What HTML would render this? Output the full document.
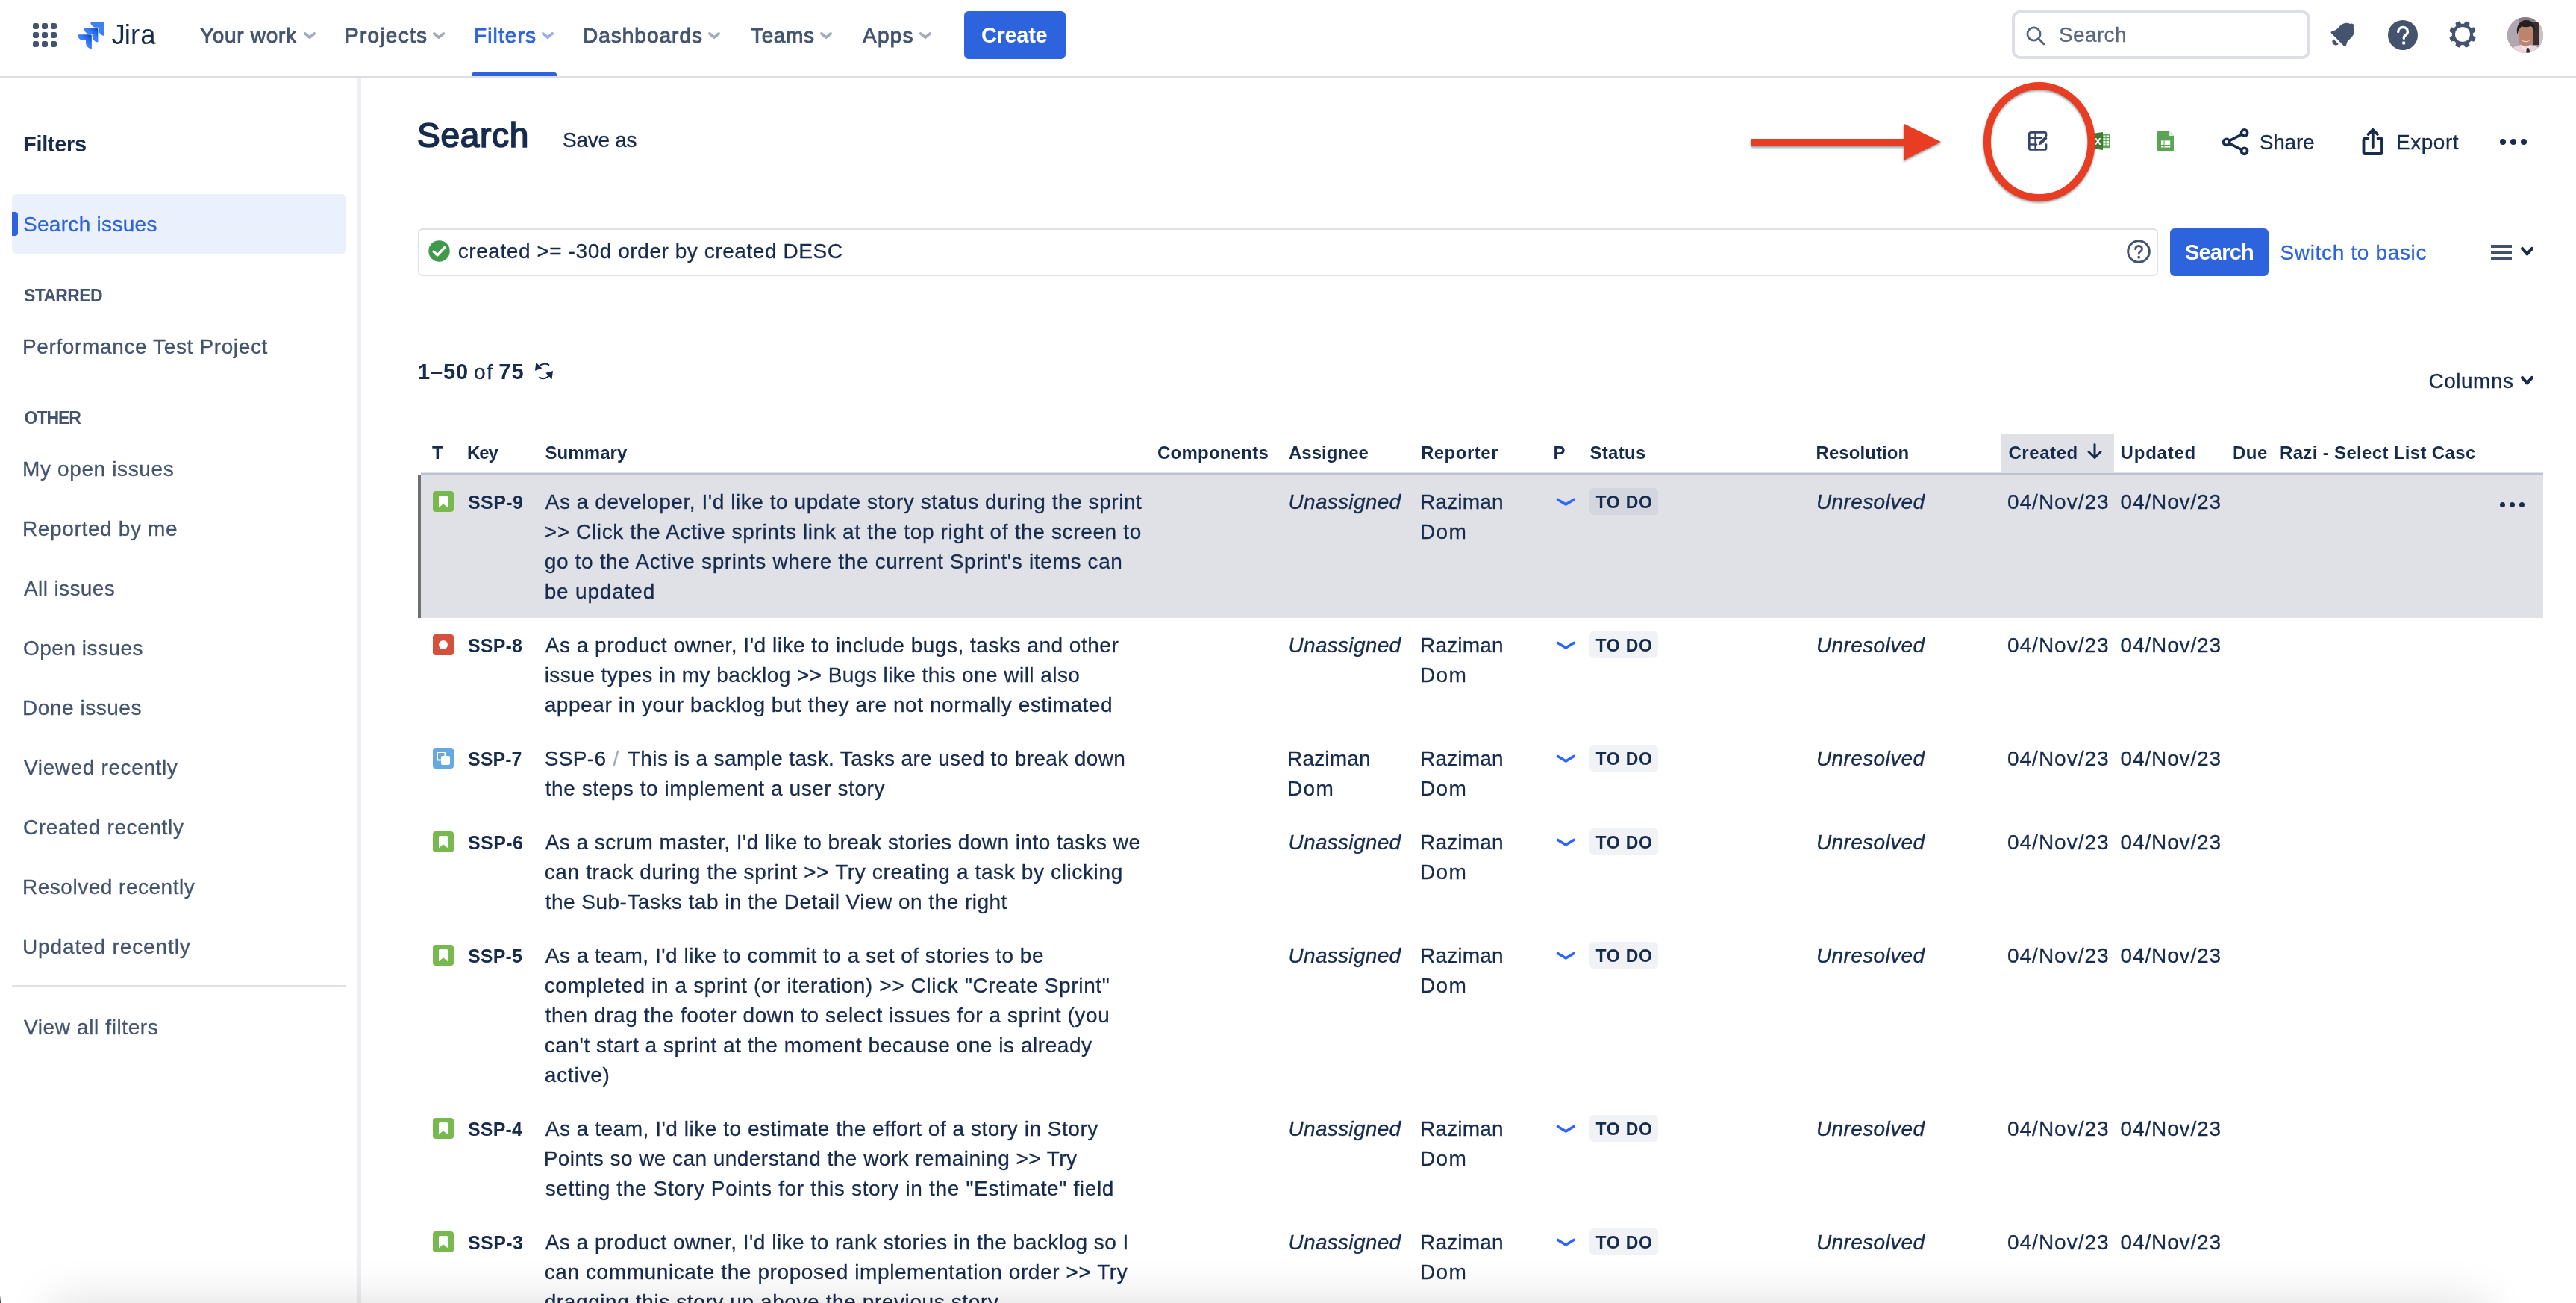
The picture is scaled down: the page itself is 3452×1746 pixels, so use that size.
<!DOCTYPE html>
<html lang="en"><head><meta charset="utf-8"><title>Search - Jira</title><style>
*{box-sizing:border-box;margin:0;padding:0}
html,body{width:3452px;height:1746px;overflow:hidden;background:#fff}
body{position:relative;font-family:"Liberation Sans",sans-serif;color:#172b4d;font-size:28px}
.t{position:absolute;white-space:nowrap;line-height:1;display:block;font-weight:400;font-style:normal;text-decoration:none}
.abs{position:absolute}
header,aside,main{position:absolute;left:0;top:0;will-change:transform}
svg{position:absolute;overflow:visible}
.navline{left:0;top:102px;width:3452px;height:2px;background:#dcdee4}
.sideline{left:478px;top:104px;width:6px;height:1642px;background:#edeef1}
.btn{background:#2d64dd;border-radius:6px}
.loz{position:absolute;left:2130px;width:92px;height:36px;border-radius:6px;background:#f1f2f5}
.sel .loz{background:#d3d6df}
.ic{position:absolute;left:580px;width:28px;height:28px}
.row{position:absolute;left:0;width:3452px}
</style></head><body><header><svg style="left:44px;top:31px" width="32" height="32" viewBox="0 0 32 32" fill="#44546f"><rect x="0" y="0" width="8" height="8" rx="2.4"/><rect x="12" y="0" width="8" height="8" rx="2.4"/><rect x="24" y="0" width="8" height="8" rx="2.4"/><rect x="0" y="12" width="8" height="8" rx="2.4"/><rect x="12" y="12" width="8" height="8" rx="2.4"/><rect x="24" y="12" width="8" height="8" rx="2.4"/><rect x="0" y="24" width="8" height="8" rx="2.4"/><rect x="12" y="24" width="8" height="8" rx="2.4"/><rect x="24" y="24" width="8" height="8" rx="2.4"/></svg><svg style="left:104px;top:23px" width="36" height="42" viewBox="0 0 23.94 27.93">
<defs><linearGradient id="jg1" x1="17.9" y1="9.8" x2="13.0" y2="14.9" gradientUnits="userSpaceOnUse"><stop offset="0.18" stop-color="#0f4ed0"/><stop offset="1" stop-color="#3b7df6"/></linearGradient>
<linearGradient id="jg2" x1="12.3" y1="15.5" x2="6.7" y2="21.0" gradientUnits="userSpaceOnUse"><stop offset="0.18" stop-color="#0f4ed0"/><stop offset="1" stop-color="#3b7df6"/></linearGradient></defs>
<path d="M22.9366 4H11.4099C11.4099 5.37956 11.958 6.70259 12.9335 7.6781C13.909 8.6536 15.232 9.20163 16.6116 9.20163H18.7349V11.2517C18.7367 14.1219 21.063 16.4482 23.9332 16.45V4.99664C23.9332 4.44622 23.487 4 22.9366 4Z" fill="#4080f5"/>
<path d="M17.2332 9.74329H5.70646C5.70826 12.6135 8.03452 14.9398 10.9047 14.9416H13.0281V16.9982C13.0317 19.8684 15.3594 22.1932 18.2296 22.1932V10.7399C18.2296 10.1895 17.7836 9.74329 17.2332 9.74329Z" fill="url(#jg1)"/>
<path d="M11.5266 15.4833H0C0 18.3561 2.32888 20.6849 5.20166 20.6849H7.33164V22.735C7.33343 25.6026 9.65557 27.928 12.5233 27.9333V16.4799C12.5233 15.9295 12.077 15.4833 11.5266 15.4833Z" fill="url(#jg2)"/></svg><svg style="left:0;top:0" width="260" height="100" viewBox="0 0 260 100"><text x="149.500 166.800 175 188.300" y="59.100" font-family="Liberation Sans, sans-serif" font-size="36.500" fill="#172b4d">Jira</text></svg><span class="t" style="left:268.0px;top:33.8px;font-size:28px;letter-spacing:0.69px;color:#44546f;-webkit-text-stroke:0.9px;">Your work</span><svg style="left:407px;top:43px" width="16" height="9" viewBox="0 0 16 9"><path d="M1.8 1.8 L8.0 7.2 L14.2 1.8" fill="none" stroke="#a3abba" stroke-width="3.6" stroke-linecap="round" stroke-linejoin="round"/></svg><span class="t" style="left:462.0px;top:33.8px;font-size:28px;letter-spacing:1.27px;color:#44546f;-webkit-text-stroke:0.9px;">Projects</span><svg style="left:580px;top:43px" width="16" height="9" viewBox="0 0 16 9"><path d="M1.8 1.8 L8.0 7.2 L14.2 1.8" fill="none" stroke="#a3abba" stroke-width="3.6" stroke-linecap="round" stroke-linejoin="round"/></svg><span class="t" style="left:635.0px;top:33.8px;font-size:28px;letter-spacing:1.13px;color:#2d64dd;-webkit-text-stroke:0.9px;">Filters</span><svg style="left:726px;top:43px" width="16" height="9" viewBox="0 0 16 9"><path d="M1.8 1.8 L8.0 7.2 L14.2 1.8" fill="none" stroke="#93b0ee" stroke-width="3.6" stroke-linecap="round" stroke-linejoin="round"/></svg><span class="t" style="left:781.0px;top:33.8px;font-size:28px;letter-spacing:1.00px;color:#44546f;-webkit-text-stroke:0.9px;">Dashboards</span><svg style="left:949px;top:43px" width="16" height="9" viewBox="0 0 16 9"><path d="M1.8 1.8 L8.0 7.2 L14.2 1.8" fill="none" stroke="#a3abba" stroke-width="3.6" stroke-linecap="round" stroke-linejoin="round"/></svg><span class="t" style="left:1006.0px;top:33.8px;font-size:28px;letter-spacing:0.63px;color:#44546f;-webkit-text-stroke:0.9px;">Teams</span><svg style="left:1099px;top:43px" width="16" height="9" viewBox="0 0 16 9"><path d="M1.8 1.8 L8.0 7.2 L14.2 1.8" fill="none" stroke="#a3abba" stroke-width="3.6" stroke-linecap="round" stroke-linejoin="round"/></svg><span class="t" style="left:1156.0px;top:33.8px;font-size:28px;letter-spacing:1.23px;color:#44546f;-webkit-text-stroke:0.9px;">Apps</span><svg style="left:1232px;top:43px" width="16" height="9" viewBox="0 0 16 9"><path d="M1.8 1.8 L8.0 7.2 L14.2 1.8" fill="none" stroke="#a3abba" stroke-width="3.6" stroke-linecap="round" stroke-linejoin="round"/></svg><div class="abs" style="left:632px;top:97px;width:114px;height:6px;background:#2d64dd;border-radius:3px 3px 0 0"></div><div class="abs btn" style="left:1292px;top:15px;width:136px;height:64px"></div><span class="t" style="left:1315.0px;top:32.8px;font-size:29px;letter-spacing:-0.33px;font-weight:700;color:#fff;">Create</span><div class="abs" style="left:2696px;top:14px;width:400px;height:65px;border:4px solid #dcdfe6;border-radius:11px"></div><svg style="left:2715px;top:35px" width="26" height="26" viewBox="0 0 26 26"><circle cx="10.5" cy="10.5" r="8.6" fill="none" stroke="#56637c" stroke-width="2.8"/><path d="M17 17 L24 24" stroke="#56637c" stroke-width="2.8" stroke-linecap="round"/></svg><span class="t" style="left:2759.0px;top:32.8px;font-size:28px;letter-spacing:0.37px;color:#5b6881;-webkit-text-stroke:0.3px;">Search</span><svg style="left:3113.700px;top:22px" width="49.800" height="49.800" viewBox="0 0 40 40"><g transform="rotate(45 20 20)" fill="#44546f">
<path d="M20 3.500c1.300 0 2.300.9 2.400 2.100c3.900 1.100 6.300 4.600 6.300 8.800v6.500l2.100 4.300c.5.900-.1 1.900-1.100 1.900H10.300c-1 0-1.600-1-1.100-1.900l2.100-4.300v-6.500c0-4.200 2.400-7.700 6.300-8.800c.1-1.200 1.100-2.100 2.400-2.100z"/>
<path d="M16 29.800h8c0 2.200-1.800 3.900-4 3.900s-4-1.700-4-3.900z"/></g></svg><svg style="left:3200px;top:27px" width="40" height="40" viewBox="0 0 40 40"><circle cx="20" cy="20" r="20" fill="#44546f"/><path d="M13.700 15.500c0-3.500 2.800-6 6.400-6s6.300 2.400 6.300 5.800c0 2.600-1.500 4-3.200 5.100c-1.300.9-1.900 1.600-1.900 3v.8" fill="none" stroke="#fff" stroke-width="3.400" stroke-linecap="round"/><circle cx="21.200" cy="30.500" r="2.300" fill="#fff"/></svg><svg style="left:3279.5px;top:26.300px" width="40" height="40" viewBox="0 0 40 40"><path d="M32.96 22.53 L36.28 24.55 L34.73 28.29 L30.95 27.37 L27.37 30.95 L28.29 34.73 L24.55 36.28 L22.53 32.96 L17.47 32.96 L15.45 36.28 L11.71 34.73 L12.63 30.95 L9.05 27.37 L5.27 28.29 L3.72 24.55 L7.04 22.53 L7.04 17.47 L3.72 15.45 L5.27 11.71 L9.05 12.63 L12.63 9.05 L11.71 5.27 L15.45 3.72 L17.47 7.04 L22.53 7.04 L24.55 3.72 L28.29 5.27 L27.37 9.05 L30.95 12.63 L34.73 11.71 L36.28 15.45 L32.96 17.47Z M20 9.6a10.4 10.4 0 1 0 0 20.800a10.400 10.400 0 1 0 0-20.800Z" fill="#44546f" fill-rule="evenodd" stroke="#44546f" stroke-width="2.4" stroke-linejoin="round"/><circle cx="20" cy="20" r="10.100" fill="#fff"/></svg><svg style="left:3360px;top:23px" width="48" height="48" viewBox="0 0 48 48"><defs><clipPath id="av"><circle cx="24" cy="24" r="24"/></clipPath></defs>
<g clip-path="url(#av)"><rect width="48" height="48" fill="#9f939d"/><rect x="0" y="0" width="15" height="48" fill="#b1a7b1"/><rect x="16" y="0" width="20" height="12" fill="#8a7d88"/><rect x="34" y="7" width="8.500" height="30" fill="#3a2d2b"/><rect x="42.500" y="0" width="6" height="48" fill="#c9c1c9"/>
<path d="M3 48c1-7 7-9.500 13-10.500l8-2l9 2c6 1 11 3.500 12 10.500z" fill="#ead5da"/>
<ellipse cx="24.800" cy="24.500" rx="10" ry="14.500" fill="#bd846d"/>
<path d="M13.500 23c-2.500-10 3-19 11.500-19s13.500 6 11.800 17c-.8-4-2.500-7.500-5.300-9c-4 1.500-9 1.500-12.500.3c-2.500 2.200-4.500 6-5.500 10.700z" fill="#261e21"/>
<path d="M19.500 30.500c3 2.400 8 2.400 10.500 0c-1 3.600-9.500 3.600-10.500 0z" fill="#f3e6e2"/>
<path d="M20 38l4.800 4l4.800-4l1 2l-5.800 5l-5.800-5z" fill="#f6ecef"/>
<path d="M25.500 43.500l1.500-2.500l2 .5l1.500 7h-5z" fill="#2c2630"/></g></svg><div class="abs navline"></div></header><aside><div class="abs sideline"></div><h2 class="t" style="left:31.0px;top:178.8px;font-size:29px;letter-spacing:-0.32px;font-weight:700;color:#172b4d;">Filters</h2><div class="abs" style="left:16px;top:260px;width:448px;height:80px;background:#eaf0fc;border-radius:6px"></div><div class="abs" style="left:16px;top:284px;width:8px;height:32px;background:#2d64dd;border-radius:0 4px 4px 0"></div><a class="t" style="left:31.0px;top:286.8px;font-size:28px;letter-spacing:0.30px;color:#2d64dd;-webkit-text-stroke:0.3px;">Search issues</a><span class="t" style="left:32.0px;top:384.8px;font-size:23px;letter-spacing:-0.64px;font-weight:700;color:#44546f;">STARRED</span><a class="t" style="left:30.0px;top:450.8px;font-size:28px;letter-spacing:0.63px;color:#44546f;-webkit-text-stroke:0.3px;">Performance Test Project</a><span class="t" style="left:32.6px;top:548.8px;font-size:23px;letter-spacing:-1.05px;font-weight:700;color:#44546f;">OTHER</span><a class="t" style="left:30.0px;top:614.8px;font-size:28px;letter-spacing:0.63px;color:#44546f;-webkit-text-stroke:0.3px;">My open issues</a><a class="t" style="left:30.0px;top:694.8px;font-size:28px;letter-spacing:0.64px;color:#44546f;-webkit-text-stroke:0.3px;">Reported by me</a><a class="t" style="left:32.0px;top:774.8px;font-size:28px;letter-spacing:0.38px;color:#44546f;-webkit-text-stroke:0.3px;">All issues</a><a class="t" style="left:31.0px;top:854.8px;font-size:28px;letter-spacing:0.49px;color:#44546f;-webkit-text-stroke:0.3px;">Open issues</a><a class="t" style="left:30.0px;top:934.8px;font-size:28px;letter-spacing:0.54px;color:#44546f;-webkit-text-stroke:0.3px;">Done issues</a><a class="t" style="left:32.0px;top:1014.8px;font-size:28px;letter-spacing:0.62px;color:#44546f;-webkit-text-stroke:0.3px;">Viewed recently</a><a class="t" style="left:31.0px;top:1094.8px;font-size:28px;letter-spacing:0.63px;color:#44546f;-webkit-text-stroke:0.3px;">Created recently</a><a class="t" style="left:30.0px;top:1174.8px;font-size:28px;letter-spacing:0.51px;color:#44546f;-webkit-text-stroke:0.3px;">Resolved recently</a><a class="t" style="left:30.0px;top:1254.8px;font-size:28px;letter-spacing:0.87px;color:#44546f;-webkit-text-stroke:0.3px;">Updated recently</a><div class="abs" style="left:16px;top:1320px;width:448px;height:3px;background:#dfe1e6"></div><a class="t" style="left:32.0px;top:1362.8px;font-size:28px;letter-spacing:0.61px;color:#44546f;-webkit-text-stroke:0.3px;">View all filters</a></aside><main><svg style="left:2799px;top:177px" width="29" height="24" viewBox="3 0 29 24"><rect x="20" y="2.600" width="12" height="18.600" fill="#5fa852"/><path d="M22.500 5.500h7.500M22.500 9.200h7.500M22.500 12.900h7.500M22.500 16.600h7.500" stroke="#fff" stroke-width="2"/><path d="M26 3.500V20" stroke="#5fa852" stroke-width="1.200"/><path d="M4.500 2.400L22 0V24L4.500 21.600Z" fill="#3f7d38"/><text x="10.700" y="16.600" font-family="Liberation Sans, sans-serif" font-size="13.500" font-weight="700" fill="#fff">X</text></svg><h1 class="t" style="left:559.0px;top:158.2px;font-size:46px;letter-spacing:0.71px;color:#172b4d;-webkit-text-stroke:1.7px;">Search</h1><span class="t" style="left:754.0px;top:173.8px;font-size:28px;letter-spacing:-0.26px;color:#172b4d;-webkit-text-stroke:0.3px;">Save as</span><svg style="left:2330px;top:100px;filter:drop-shadow(0 2.500px 1.600px rgba(60,85,95,.55))" width="500" height="190" viewBox="2330 100 500 190">
<rect x="2346.5" y="186" width="210" height="10" fill="#e83d23"/><path d="M2551 165.500 L2601 190 L2551 215Z" fill="#e83d23"/>
<ellipse cx="2732.700" cy="190" rx="69.800" ry="75" fill="none" stroke="#e83d23" stroke-width="10"/></svg><svg style="left:2716px;top:174px" width="30" height="30" viewBox="0 0 30 30" fill="none" stroke="#36466a" stroke-width="2.700" stroke-linecap="round" stroke-linejoin="round">
<path d="M26 19.500V24.500a2 2 0 0 1-2 2H5.300a2 2 0 0 1-2-2V5.300a2 2 0 0 1 2-2H24a2 2 0 0 1 2 2V8"/><path d="M11.700 3.500V26.500M3.500 10.700H19M3.500 19.500H13"/>
<path d="M16.300 19.800l1-3.200l7.400-7.400l2.200 2.200l-7.400 7.400z" fill="#36466a" stroke-width="1.200"/></svg><svg style="left:2891px;top:175px" width="22" height="28" viewBox="0 0 22 28"><path d="M2 0H15L22 7V26a2 2 0 0 1-2 2H2a2 2 0 0 1-2-2V2a2 2 0 0 1 2-2Z" fill="#5ba455"/><path d="M15 0L22 7H16.500A1.500 1.500 0 0 1 15 5.500Z" fill="#e7f1e4"/>
<rect x="5" y="13.400" width="12.200" height="9.100" fill="#fff"/><path d="M5 16.500H17.200M5 19.500H17.200M9 13.400V22.500" stroke="#5ba455" stroke-width="1.100"/></svg><svg style="left:2976px;top:170px" width="40" height="40" viewBox="0 0 40 40" fill="none" stroke="#172b4d" stroke-width="3.600"><path d="M8 20.300L31 8.500M8 20.300L31 32" stroke-linecap="round"/><circle cx="7.700" cy="20.300" r="4.100" fill="#fff"/><circle cx="31.600" cy="8" r="4.100" fill="#fff"/><circle cx="31.600" cy="32.300" r="4.100" fill="#fff"/></svg><span class="t" style="left:3027.8px;top:176.8px;font-size:28px;letter-spacing:-0.24px;color:#172b4d;-webkit-text-stroke:0.3px;">Share</span><svg style="left:3164px;top:170px" width="32" height="40" viewBox="0 0 32 40" fill="none" stroke="#172b4d" stroke-width="3.800" stroke-linecap="round" stroke-linejoin="round"><path d="M9 15.500H5.500a2 2 0 0 0-2 2V34a2 2 0 0 0 2 2H26a2 2 0 0 0 2-2V17.500a2 2 0 0 0-2-2H22.500"/><path d="M15.800 27V5M9.500 10L15.800 3.800L22 10"/></svg><span class="t" style="left:3211.0px;top:176.8px;font-size:28px;letter-spacing:0.53px;color:#172b4d;-webkit-text-stroke:0.3px;">Export</span><svg style="left:3350px;top:186px" width="36" height="8" viewBox="0 0 36 8" fill="#172b4d"><circle cx="4" cy="4" r="4"/><circle cx="18" cy="4" r="4"/><circle cx="32" cy="4" r="4"/></svg><div class="abs" style="left:560px;top:306px;width:2332px;height:64px;border:2px solid #dfe1e6;border-radius:6px"></div><svg style="left:573.500px;top:321.500px" width="29" height="29" viewBox="0 0 29 29"><circle cx="14.500" cy="14.400" r="14.250" fill="#41994a"/><path d="M7.200 15.200l5 4.700l9.400-10.200" fill="none" stroke="#fff" stroke-width="3.500" stroke-linecap="round" stroke-linejoin="round"/></svg><span class="t" style="left:613.8px;top:322.8px;font-size:28px;letter-spacing:0.56px;color:#172b4d;-webkit-text-stroke:0.3px;">created &gt;= -30d order by created DESC</span><svg style="left:2849.500px;top:321px" width="32" height="32" viewBox="0 0 32 32" fill="none" stroke="#44546f" stroke-width="3"><circle cx="16" cy="16" r="14.300"/><path d="M11.600 12.800c0-2.500 1.900-4.300 4.500-4.300s4.400 1.700 4.400 4c0 1.800-1 2.800-2.300 3.700c-1.200.8-1.900 1.400-1.900 2.600v.4" stroke-linecap="round" stroke-width="2.800"/><circle cx="16.200" cy="23.700" r="1.900" fill="#44546f" stroke="none"/></svg><div class="abs btn" style="left:2908px;top:306px;width:132px;height:64px"></div><span class="t" style="left:2928.0px;top:323.8px;font-size:29px;letter-spacing:-0.80px;font-weight:700;color:#fff;">Search</span><a class="t" style="left:3055.5px;top:324.8px;font-size:28px;letter-spacing:0.66px;color:#2d64dd;-webkit-text-stroke:0.3px;">Switch to basic</a><svg style="left:3338px;top:328px" width="28" height="20" viewBox="0 0 28 20" fill="#42526e"><rect y="0" width="28" height="4"/><rect y="8" width="28" height="4"/><rect y="16" width="28" height="4"/></svg><svg style="left:3378px;top:331px" width="17" height="11.5" viewBox="0 0 17 11.5"><path d="M2.1 2.1 L8.5 9.4 L14.9 2.1" fill="none" stroke="#172b4d" stroke-width="4.2" stroke-linecap="round" stroke-linejoin="round"/></svg><span class="t" style="left:559.9px;top:483.8px;font-size:29px;letter-spacing:0.90px;font-weight:700;color:#172b4d;">1–50</span><span class="t" style="left:634.9px;top:484.8px;font-size:28px;letter-spacing:1.73px;color:#172b4d;-webkit-text-stroke:0.3px;">of</span><span class="t" style="left:668.2px;top:483.8px;font-size:29px;letter-spacing:1.17px;font-weight:700;color:#172b4d;">75</span><svg style="left:716px;top:484px" width="26" height="26" viewBox="0 0 26 26"><path d="M5 10A9.800 9.800 0 0 1 20 5.400M21.300 16A9.800 9.800 0 0 1 6.300 21.300" fill="none" stroke="#172b4d" stroke-width="2.100"/><path d="M2.400 1.800L.9 12.800L10.300 9.500ZM25 13L23.500 24.200L15.300 15.800Z" fill="#172b4d"/></svg><span class="t" style="left:3254.5px;top:496.8px;font-size:28px;letter-spacing:0.50px;color:#172b4d;-webkit-text-stroke:0.3px;">Columns</span><svg style="left:3378px;top:503.5px" width="17" height="11.5" viewBox="0 0 17 11.5"><path d="M2.1 2.1 L8.5 9.4 L14.9 2.1" fill="none" stroke="#172b4d" stroke-width="4.2" stroke-linecap="round" stroke-linejoin="round"/></svg><section><div class="abs" style="left:2682px;top:582px;width:151px;height:51px;background:#dfe1e7"></div><b class="t" style="left:579.0px;top:594.8px;font-size:24px;font-weight:700;color:#172b4d;">T</b><b class="t" style="left:626.0px;top:594.8px;font-size:24px;letter-spacing:-1.09px;font-weight:700;color:#172b4d;">Key</b><b class="t" style="left:730.5px;top:594.8px;font-size:24px;letter-spacing:0.08px;font-weight:700;color:#172b4d;">Summary</b><b class="t" style="left:1551.0px;top:594.8px;font-size:24px;letter-spacing:0.24px;font-weight:700;color:#172b4d;">Components</b><b class="t" style="left:1727.0px;top:594.8px;font-size:24px;letter-spacing:0.02px;font-weight:700;color:#172b4d;">Assignee</b><b class="t" style="left:1904.0px;top:594.8px;font-size:24px;letter-spacing:0.47px;font-weight:700;color:#172b4d;">Reporter</b><b class="t" style="left:2081.5px;top:594.8px;font-size:24px;font-weight:700;color:#172b4d;">P</b><b class="t" style="left:2130.5px;top:594.8px;font-size:24px;letter-spacing:0.30px;font-weight:700;color:#172b4d;">Status</b><b class="t" style="left:2433.5px;top:594.8px;font-size:24px;letter-spacing:0.07px;font-weight:700;color:#172b4d;">Resolution</b><b class="t" style="left:2691.4px;top:594.8px;font-size:24px;letter-spacing:0.58px;font-weight:700;color:#172b4d;">Created</b><b class="t" style="left:2841.6px;top:594.8px;font-size:24px;letter-spacing:0.78px;font-weight:700;color:#172b4d;">Updated</b><b class="t" style="left:2992.0px;top:594.8px;font-size:24px;letter-spacing:0.50px;font-weight:700;color:#172b4d;">Due</b><b class="t" style="left:3055.0px;top:594.8px;font-size:24px;letter-spacing:0.34px;font-weight:700;color:#172b4d;">Razi - Select List Casc</b><svg style="left:2796px;top:593px" width="22" height="23" viewBox="0 0 22 23" fill="none" stroke="#172b4d" stroke-width="3" stroke-linecap="round" stroke-linejoin="round"><path d="M11 2.500V20M3 12.500L11 20.500L19 12.500"/></svg><div class="abs" style="left:564px;top:632px;width:2844px;height:4px;background:linear-gradient(#dfe1e7 50%,#bcc2cf 50%)"></div><article class="row sel" style="top:636px;height:192px"><div class="abs" style="left:560px;top:0;width:2848px;height:192px;background:#dfe1e7;border-left:4px solid #707070"></div><svg class="ic" style="top:22px" viewBox="0 0 28 28"><rect width="28" height="28" rx="4" fill="#77b84f"/><path d="M8 7.500a1.500 1.500 0 0 1 1.500-1.500h9a1.500 1.500 0 0 1 1.500 1.500V22.300L14 17.300L8 22.300Z" fill="#fff"/></svg><a class="t" style="left:627.0px;top:24.8px;font-size:25px;letter-spacing:0.41px;font-weight:700;color:#172b4d;">SSP-9</a><span class="t" style="left:730.7px;top:22.8px;font-size:28px;letter-spacing:0.56px;color:#172b4d;-webkit-text-stroke:0.3px;">As a developer, I'd like to update story status during the sprint</span><span class="t" style="left:729.7px;top:62.8px;font-size:28px;letter-spacing:0.64px;color:#172b4d;-webkit-text-stroke:0.3px;">&gt;&gt; Click the Active sprints link at the top right of the screen to</span><span class="t" style="left:729.7px;top:102.8px;font-size:28px;letter-spacing:0.65px;color:#172b4d;-webkit-text-stroke:0.3px;">go to the Active sprints where the current Sprint's items can</span><span class="t" style="left:729.7px;top:142.8px;font-size:28px;letter-spacing:0.82px;color:#172b4d;-webkit-text-stroke:0.3px;">be updated</span><em class="t" style="left:1726.5px;top:22.8px;font-size:28px;letter-spacing:0.30px;font-style:italic;color:#172b4d;-webkit-text-stroke:0.3px;">Unassigned</em><span class="t" style="left:1903.0px;top:22.8px;font-size:28px;letter-spacing:0.18px;color:#172b4d;-webkit-text-stroke:0.3px;">Raziman</span><span class="t" style="left:1903.0px;top:62.8px;font-size:28px;letter-spacing:1.35px;color:#172b4d;-webkit-text-stroke:0.3px;">Dom</span><svg style="left:2085px;top:30px" width="27" height="14" viewBox="0 0 27 14"><path d="M2.500 3.500L13.300 10L24 3.500" fill="none" stroke="#2a66ff" stroke-width="3.700" stroke-linecap="round" stroke-linejoin="round"/></svg><div class="loz" style="top:18px"></div><span class="t" style="left:2138.5px;top:25.8px;font-size:23px;letter-spacing:0.74px;font-weight:700;color:#172b4d;">TO DO</span><em class="t" style="left:2434.0px;top:22.8px;font-size:28px;letter-spacing:0.38px;font-style:italic;color:#172b4d;-webkit-text-stroke:0.3px;">Unresolved</em><span class="t" style="left:2690.0px;top:22.8px;font-size:28px;letter-spacing:0.99px;color:#172b4d;-webkit-text-stroke:0.3px;">04/Nov/23</span><span class="t" style="left:2841.6px;top:22.8px;font-size:28px;letter-spacing:0.85px;color:#172b4d;-webkit-text-stroke:0.3px;">04/Nov/23</span><svg style="left:3350px;top:36.500px" width="33" height="7" viewBox="0 0 33 7" fill="#172b4d"><circle cx="3.500" cy="3.500" r="3.500"/><circle cx="16.500" cy="3.500" r="3.500"/><circle cx="29.500" cy="3.500" r="3.500"/></svg></article><article class="row" style="top:828px;height:152px"><svg class="ic" style="top:22px" viewBox="0 0 28 28"><rect width="28" height="28" rx="4" fill="#d4503f"/><circle cx="14" cy="14" r="6" fill="#fff"/></svg><a class="t" style="left:627.0px;top:24.8px;font-size:25px;letter-spacing:0.16px;font-weight:700;color:#172b4d;">SSP-8</a><span class="t" style="left:730.7px;top:22.8px;font-size:28px;letter-spacing:0.52px;color:#172b4d;-webkit-text-stroke:0.3px;">As a product owner, I'd like to include bugs, tasks and other</span><span class="t" style="left:729.7px;top:62.8px;font-size:28px;letter-spacing:0.44px;color:#172b4d;-webkit-text-stroke:0.3px;">issue types in my backlog &gt;&gt; Bugs like this one will also</span><span class="t" style="left:729.7px;top:102.8px;font-size:28px;letter-spacing:0.57px;color:#172b4d;-webkit-text-stroke:0.3px;">appear in your backlog but they are not normally estimated</span><em class="t" style="left:1726.5px;top:22.8px;font-size:28px;letter-spacing:0.30px;font-style:italic;color:#172b4d;-webkit-text-stroke:0.3px;">Unassigned</em><span class="t" style="left:1903.0px;top:22.8px;font-size:28px;letter-spacing:0.18px;color:#172b4d;-webkit-text-stroke:0.3px;">Raziman</span><span class="t" style="left:1903.0px;top:62.8px;font-size:28px;letter-spacing:1.35px;color:#172b4d;-webkit-text-stroke:0.3px;">Dom</span><svg style="left:2085px;top:30px" width="27" height="14" viewBox="0 0 27 14"><path d="M2.500 3.500L13.300 10L24 3.500" fill="none" stroke="#2a66ff" stroke-width="3.700" stroke-linecap="round" stroke-linejoin="round"/></svg><div class="loz" style="top:18px"></div><span class="t" style="left:2138.5px;top:25.8px;font-size:23px;letter-spacing:0.74px;font-weight:700;color:#172b4d;">TO DO</span><em class="t" style="left:2434.0px;top:22.8px;font-size:28px;letter-spacing:0.38px;font-style:italic;color:#172b4d;-webkit-text-stroke:0.3px;">Unresolved</em><span class="t" style="left:2690.0px;top:22.8px;font-size:28px;letter-spacing:0.99px;color:#172b4d;-webkit-text-stroke:0.3px;">04/Nov/23</span><span class="t" style="left:2841.6px;top:22.8px;font-size:28px;letter-spacing:0.85px;color:#172b4d;-webkit-text-stroke:0.3px;">04/Nov/23</span></article><article class="row" style="top:980px;height:112px"><svg class="ic" style="top:22px" viewBox="0 0 28 28"><rect width="28" height="28" rx="4" fill="#66a8e0"/><rect x="6" y="6" width="10.500" height="10.500" rx="1.600" fill="none" stroke="#fff" stroke-width="2"/><rect x="11" y="11" width="12" height="12" rx="2" fill="#fff"/></svg><a class="t" style="left:627.0px;top:24.8px;font-size:25px;letter-spacing:0.04px;font-weight:700;color:#172b4d;">SSP-7</a><span class="t" style="left:729.7px;top:22.8px;font-size:28px;letter-spacing:0.36px;color:#172b4d;-webkit-text-stroke:0.3px;">SSP-6</span><span class="t" style="left:821.5px;top:22.8px;font-size:28px;color:#a1a9b7;-webkit-text-stroke:0.3px;">/</span><span class="t" style="left:840.9px;top:22.8px;font-size:28px;letter-spacing:0.37px;color:#172b4d;-webkit-text-stroke:0.3px;">This is a sample task. Tasks are used to break down</span><span class="t" style="left:730.7px;top:62.8px;font-size:28px;letter-spacing:0.56px;color:#172b4d;-webkit-text-stroke:0.3px;">the steps to implement a user story</span><span class="t" style="left:1725.0px;top:22.8px;font-size:28px;letter-spacing:0.18px;color:#172b4d;-webkit-text-stroke:0.3px;">Raziman</span><span class="t" style="left:1725.0px;top:62.8px;font-size:28px;letter-spacing:1.35px;color:#172b4d;-webkit-text-stroke:0.3px;">Dom</span><span class="t" style="left:1903.0px;top:22.8px;font-size:28px;letter-spacing:0.18px;color:#172b4d;-webkit-text-stroke:0.3px;">Raziman</span><span class="t" style="left:1903.0px;top:62.8px;font-size:28px;letter-spacing:1.35px;color:#172b4d;-webkit-text-stroke:0.3px;">Dom</span><svg style="left:2085px;top:30px" width="27" height="14" viewBox="0 0 27 14"><path d="M2.500 3.500L13.300 10L24 3.500" fill="none" stroke="#2a66ff" stroke-width="3.700" stroke-linecap="round" stroke-linejoin="round"/></svg><div class="loz" style="top:18px"></div><span class="t" style="left:2138.5px;top:25.8px;font-size:23px;letter-spacing:0.74px;font-weight:700;color:#172b4d;">TO DO</span><em class="t" style="left:2434.0px;top:22.8px;font-size:28px;letter-spacing:0.38px;font-style:italic;color:#172b4d;-webkit-text-stroke:0.3px;">Unresolved</em><span class="t" style="left:2690.0px;top:22.8px;font-size:28px;letter-spacing:0.99px;color:#172b4d;-webkit-text-stroke:0.3px;">04/Nov/23</span><span class="t" style="left:2841.6px;top:22.8px;font-size:28px;letter-spacing:0.85px;color:#172b4d;-webkit-text-stroke:0.3px;">04/Nov/23</span></article><article class="row" style="top:1092px;height:152px"><svg class="ic" style="top:22px" viewBox="0 0 28 28"><rect width="28" height="28" rx="4" fill="#77b84f"/><path d="M8 7.500a1.500 1.500 0 0 1 1.500-1.500h9a1.500 1.500 0 0 1 1.500 1.500V22.300L14 17.300L8 22.300Z" fill="#fff"/></svg><a class="t" style="left:627.0px;top:24.8px;font-size:25px;letter-spacing:0.41px;font-weight:700;color:#172b4d;">SSP-6</a><span class="t" style="left:730.7px;top:22.8px;font-size:28px;letter-spacing:0.45px;color:#172b4d;-webkit-text-stroke:0.3px;">As a scrum master, I'd like to break stories down into tasks we</span><span class="t" style="left:729.7px;top:62.8px;font-size:28px;letter-spacing:0.63px;color:#172b4d;-webkit-text-stroke:0.3px;">can track during the sprint &gt;&gt; Try creating a task by clicking</span><span class="t" style="left:730.7px;top:102.8px;font-size:28px;letter-spacing:0.48px;color:#172b4d;-webkit-text-stroke:0.3px;">the Sub-Tasks tab in the Detail View on the right</span><em class="t" style="left:1726.5px;top:22.8px;font-size:28px;letter-spacing:0.30px;font-style:italic;color:#172b4d;-webkit-text-stroke:0.3px;">Unassigned</em><span class="t" style="left:1903.0px;top:22.8px;font-size:28px;letter-spacing:0.18px;color:#172b4d;-webkit-text-stroke:0.3px;">Raziman</span><span class="t" style="left:1903.0px;top:62.8px;font-size:28px;letter-spacing:1.35px;color:#172b4d;-webkit-text-stroke:0.3px;">Dom</span><svg style="left:2085px;top:30px" width="27" height="14" viewBox="0 0 27 14"><path d="M2.500 3.500L13.300 10L24 3.500" fill="none" stroke="#2a66ff" stroke-width="3.700" stroke-linecap="round" stroke-linejoin="round"/></svg><div class="loz" style="top:18px"></div><span class="t" style="left:2138.5px;top:25.8px;font-size:23px;letter-spacing:0.74px;font-weight:700;color:#172b4d;">TO DO</span><em class="t" style="left:2434.0px;top:22.8px;font-size:28px;letter-spacing:0.38px;font-style:italic;color:#172b4d;-webkit-text-stroke:0.3px;">Unresolved</em><span class="t" style="left:2690.0px;top:22.8px;font-size:28px;letter-spacing:0.99px;color:#172b4d;-webkit-text-stroke:0.3px;">04/Nov/23</span><span class="t" style="left:2841.6px;top:22.8px;font-size:28px;letter-spacing:0.85px;color:#172b4d;-webkit-text-stroke:0.3px;">04/Nov/23</span></article><article class="row" style="top:1244px;height:232px"><svg class="ic" style="top:22px" viewBox="0 0 28 28"><rect width="28" height="28" rx="4" fill="#77b84f"/><path d="M8 7.500a1.500 1.500 0 0 1 1.500-1.500h9a1.500 1.500 0 0 1 1.500 1.500V22.300L14 17.300L8 22.300Z" fill="#fff"/></svg><a class="t" style="left:627.0px;top:24.8px;font-size:25px;letter-spacing:0.16px;font-weight:700;color:#172b4d;">SSP-5</a><span class="t" style="left:730.7px;top:22.8px;font-size:28px;letter-spacing:0.51px;color:#172b4d;-webkit-text-stroke:0.3px;">As a team, I'd like to commit to a set of stories to be</span><span class="t" style="left:729.7px;top:62.8px;font-size:28px;letter-spacing:0.64px;color:#172b4d;-webkit-text-stroke:0.3px;">completed in a sprint (or iteration) &gt;&gt; Click "Create Sprint"</span><span class="t" style="left:730.7px;top:102.8px;font-size:28px;letter-spacing:0.60px;color:#172b4d;-webkit-text-stroke:0.3px;">then drag the footer down to select issues for a sprint (you</span><span class="t" style="left:729.7px;top:142.8px;font-size:28px;letter-spacing:0.55px;color:#172b4d;-webkit-text-stroke:0.3px;">can't start a sprint at the moment because one is already</span><span class="t" style="left:729.7px;top:182.8px;font-size:28px;letter-spacing:0.78px;color:#172b4d;-webkit-text-stroke:0.3px;">active)</span><em class="t" style="left:1726.5px;top:22.8px;font-size:28px;letter-spacing:0.30px;font-style:italic;color:#172b4d;-webkit-text-stroke:0.3px;">Unassigned</em><span class="t" style="left:1903.0px;top:22.8px;font-size:28px;letter-spacing:0.18px;color:#172b4d;-webkit-text-stroke:0.3px;">Raziman</span><span class="t" style="left:1903.0px;top:62.8px;font-size:28px;letter-spacing:1.35px;color:#172b4d;-webkit-text-stroke:0.3px;">Dom</span><svg style="left:2085px;top:30px" width="27" height="14" viewBox="0 0 27 14"><path d="M2.500 3.500L13.300 10L24 3.500" fill="none" stroke="#2a66ff" stroke-width="3.700" stroke-linecap="round" stroke-linejoin="round"/></svg><div class="loz" style="top:18px"></div><span class="t" style="left:2138.5px;top:25.8px;font-size:23px;letter-spacing:0.74px;font-weight:700;color:#172b4d;">TO DO</span><em class="t" style="left:2434.0px;top:22.8px;font-size:28px;letter-spacing:0.38px;font-style:italic;color:#172b4d;-webkit-text-stroke:0.3px;">Unresolved</em><span class="t" style="left:2690.0px;top:22.8px;font-size:28px;letter-spacing:0.99px;color:#172b4d;-webkit-text-stroke:0.3px;">04/Nov/23</span><span class="t" style="left:2841.6px;top:22.8px;font-size:28px;letter-spacing:0.85px;color:#172b4d;-webkit-text-stroke:0.3px;">04/Nov/23</span></article><article class="row" style="top:1476px;height:152px"><svg class="ic" style="top:22px" viewBox="0 0 28 28"><rect width="28" height="28" rx="4" fill="#77b84f"/><path d="M8 7.500a1.500 1.500 0 0 1 1.500-1.500h9a1.500 1.500 0 0 1 1.500 1.500V22.300L14 17.300L8 22.300Z" fill="#fff"/></svg><a class="t" style="left:627.0px;top:24.8px;font-size:25px;letter-spacing:0.16px;font-weight:700;color:#172b4d;">SSP-4</a><span class="t" style="left:730.7px;top:22.8px;font-size:28px;letter-spacing:0.53px;color:#172b4d;-webkit-text-stroke:0.3px;">As a team, I'd like to estimate the effort of a story in Story</span><span class="t" style="left:728.7px;top:62.8px;font-size:28px;letter-spacing:0.45px;color:#172b4d;-webkit-text-stroke:0.3px;">Points so we can understand the work remaining &gt;&gt; Try</span><span class="t" style="left:730.7px;top:102.8px;font-size:28px;letter-spacing:0.67px;color:#172b4d;-webkit-text-stroke:0.3px;">setting the Story Points for this story in the "Estimate" field</span><em class="t" style="left:1726.5px;top:22.8px;font-size:28px;letter-spacing:0.30px;font-style:italic;color:#172b4d;-webkit-text-stroke:0.3px;">Unassigned</em><span class="t" style="left:1903.0px;top:22.8px;font-size:28px;letter-spacing:0.18px;color:#172b4d;-webkit-text-stroke:0.3px;">Raziman</span><span class="t" style="left:1903.0px;top:62.8px;font-size:28px;letter-spacing:1.35px;color:#172b4d;-webkit-text-stroke:0.3px;">Dom</span><svg style="left:2085px;top:30px" width="27" height="14" viewBox="0 0 27 14"><path d="M2.500 3.500L13.300 10L24 3.500" fill="none" stroke="#2a66ff" stroke-width="3.700" stroke-linecap="round" stroke-linejoin="round"/></svg><div class="loz" style="top:18px"></div><span class="t" style="left:2138.5px;top:25.8px;font-size:23px;letter-spacing:0.74px;font-weight:700;color:#172b4d;">TO DO</span><em class="t" style="left:2434.0px;top:22.8px;font-size:28px;letter-spacing:0.38px;font-style:italic;color:#172b4d;-webkit-text-stroke:0.3px;">Unresolved</em><span class="t" style="left:2690.0px;top:22.8px;font-size:28px;letter-spacing:0.99px;color:#172b4d;-webkit-text-stroke:0.3px;">04/Nov/23</span><span class="t" style="left:2841.6px;top:22.8px;font-size:28px;letter-spacing:0.85px;color:#172b4d;-webkit-text-stroke:0.3px;">04/Nov/23</span></article><article class="row" style="top:1628px;height:152px"><svg class="ic" style="top:22px" viewBox="0 0 28 28"><rect width="28" height="28" rx="4" fill="#77b84f"/><path d="M8 7.500a1.500 1.500 0 0 1 1.500-1.500h9a1.500 1.500 0 0 1 1.500 1.500V22.300L14 17.300L8 22.300Z" fill="#fff"/></svg><a class="t" style="left:627.0px;top:24.8px;font-size:25px;letter-spacing:0.41px;font-weight:700;color:#172b4d;">SSP-3</a><span class="t" style="left:730.7px;top:22.8px;font-size:28px;letter-spacing:0.49px;color:#172b4d;-webkit-text-stroke:0.3px;">As a product owner, I'd like to rank stories in the backlog so I</span><span class="t" style="left:729.7px;top:62.8px;font-size:28px;letter-spacing:0.59px;color:#172b4d;-webkit-text-stroke:0.3px;">can communicate the proposed implementation order &gt;&gt; Try</span><span class="t" style="left:729.7px;top:102.8px;font-size:28px;letter-spacing:0.60px;color:#172b4d;-webkit-text-stroke:0.3px;">dragging this story up above the previous story</span><em class="t" style="left:1726.5px;top:22.8px;font-size:28px;letter-spacing:0.30px;font-style:italic;color:#172b4d;-webkit-text-stroke:0.3px;">Unassigned</em><span class="t" style="left:1903.0px;top:22.8px;font-size:28px;letter-spacing:0.18px;color:#172b4d;-webkit-text-stroke:0.3px;">Raziman</span><span class="t" style="left:1903.0px;top:62.8px;font-size:28px;letter-spacing:1.35px;color:#172b4d;-webkit-text-stroke:0.3px;">Dom</span><svg style="left:2085px;top:30px" width="27" height="14" viewBox="0 0 27 14"><path d="M2.500 3.500L13.300 10L24 3.500" fill="none" stroke="#2a66ff" stroke-width="3.700" stroke-linecap="round" stroke-linejoin="round"/></svg><div class="loz" style="top:18px"></div><span class="t" style="left:2138.5px;top:25.8px;font-size:23px;letter-spacing:0.74px;font-weight:700;color:#172b4d;">TO DO</span><em class="t" style="left:2434.0px;top:22.8px;font-size:28px;letter-spacing:0.38px;font-style:italic;color:#172b4d;-webkit-text-stroke:0.3px;">Unresolved</em><span class="t" style="left:2690.0px;top:22.8px;font-size:28px;letter-spacing:0.99px;color:#172b4d;-webkit-text-stroke:0.3px;">04/Nov/23</span><span class="t" style="left:2841.6px;top:22.8px;font-size:28px;letter-spacing:0.85px;color:#172b4d;-webkit-text-stroke:0.3px;">04/Nov/23</span></article></section><div class="abs" style="left:90px;top:1766px;width:3220px;height:40px;box-shadow:0 0 64px 20px rgba(0,0,0,.14)"></div><div class="abs" style="left:0;top:1735px;width:1.500px;height:11px;background:linear-gradient(rgba(40,40,50,0),#2a2a33)"></div></main></body></html>
